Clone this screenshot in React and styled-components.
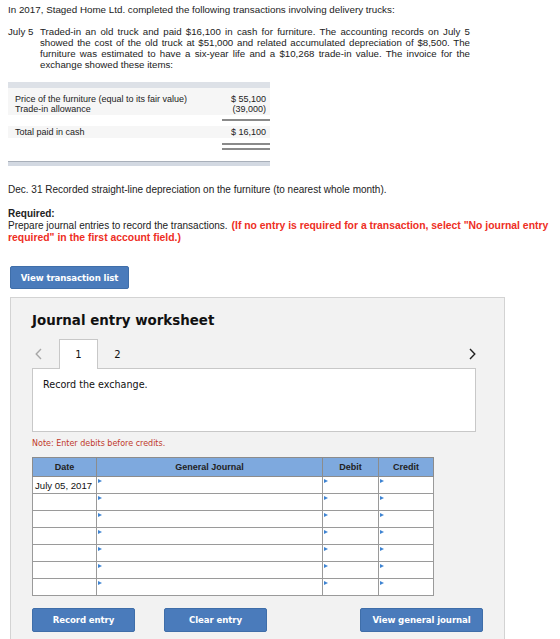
import React from 'react';
import styled, { createGlobalStyle } from 'styled-components';

const GlobalStyle = createGlobalStyle`
  body {
    margin: 0;
    background: #fff;
    font-family: "Liberation Sans", Arial, sans-serif;
    color: #222;
  }
`;

const Page = styled.div`
  width: 560px;
  height: 639px;
  overflow: hidden;
  padding: 4px 0 0 8px;
  box-sizing: border-box;
`;

const Intro = styled.p`
  margin: 0;
  font-size: 9.8px;
  line-height: 12px;
`;

const Entry = styled.div`
  display: grid;
  grid-template-columns: 32px 430px;
  margin-top: 10px;
  font-size: 9.7px;
  line-height: 11px;
  p {
    margin: 0;
    text-align: justify;
  }
`;

/* invoice block */
const Invoice = styled.div`
  width: 262px;
  margin-top: 12px;
  font-size: 9px;
  line-height: 10px;
`;

const InvoiceBand = styled.div`
  height: 6px;
  background: #dde1e7;
`;

const InvoiceRow = styled.div`
  display: grid;
  grid-template-columns: 1fr 48px;
  background: ${p => (p.$shade ? '#f6f6f6' : 'transparent')};
  padding: ${p => p.$pad || '0'};
  span:last-child {
    text-align: right;
    padding-right: 4px;
  }
`;

const Rule = styled.div`
  margin-left: auto;
  width: 48px;
  border-top: 2px solid #8a8a8a;
  height: ${p => (p.$double ? '3px' : '0')};
  border-bottom: ${p => (p.$double ? '2px solid #8a8a8a' : 'none')};
  margin-top: ${p => p.$top || '0'};
  margin-bottom: ${p => p.$bottom || '0'};
`;

const InvoiceFoot = styled.div`
  height: 4px;
  margin-top: 11px;
  background: #d3d9e2;
  border-top: 1px solid #a9b0ba;
`;

const Dec = styled.p`
  margin: 18px 0 0;
  font-size: 10px;
  line-height: 12px;
`;

const Required = styled.div`
  margin-top: 12px;
  width: 574px;
  font-size: 10px;
  line-height: 12px;
  b {
    display: block;
  }
  em {
    font-style: normal;
    font-weight: bold;
    font-size: 10.4px;
    padding-left: 4px;
    color: #ee2e24;
  }
`;

const BlueButton = styled.button`
  display: inline-flex;
  align-items: center;
  justify-content: center;
  width: ${p => p.$w}px;
  height: ${p => p.$h || 24}px;
  margin-left: ${p => p.$ml || 0}px;
  padding: 0;
  border: 1px solid #3f6ea9;
  border-radius: 2px;
  background: #4a7bbb;
  color: #fff;
  font-family: "DejaVu Sans", Verdana, sans-serif;
  font-weight: bold;
  font-size: 8.6px;
  letter-spacing: -0.1px;
`;

const TopButtonRow = styled.div`
  margin: 22px 0 0 2px;
  display: flex;
`;

/* worksheet panel */
const Panel = styled.div`
  margin: 8px 0 0 2px;
  width: 495px;
  height: 360px;
  box-sizing: border-box;
  background: #f2f2f2;
  border: 1px solid #d3d3d3;
  padding: 14px 0 0 21px;
  font-family: "DejaVu Sans", Verdana, sans-serif;
`;

const Title = styled.h2`
  margin: 0;
  font-size: 13.4px;
  line-height: 18px;
  font-weight: bold;
  color: #111;
`;

const TabBar = styled.div`
  display: flex;
  align-items: flex-end;
  height: 29px;
  margin-top: 9px;
  width: 444px;
`;

const Arrow = styled.span`
  width: 27px;
  height: 29px;
  box-sizing: border-box;
  display: flex;
  align-items: center;
  justify-content: ${p => (p.$right ? 'flex-end' : 'flex-start')};
  padding-left: ${p => (p.$right ? '0' : '3px')};
  margin-left: ${p => (p.$right ? 'auto' : '0')};
  color: ${p => (p.$muted ? '#a8a8a8' : '#222')};
  svg {
    display: block;
  }
`;

const Tab = styled.div`
  width: 39px;
  height: ${p => (p.$active ? '30px' : '28px')};
  box-sizing: border-box;
  display: flex;
  align-items: center;
  justify-content: center;
  font-size: 10px;
  color: #111;
  background: ${p => (p.$active ? '#fff' : 'transparent')};
  border: ${p => (p.$active ? '1px solid #c8c8c8' : 'none')};
  border-bottom: none;
  margin-bottom: ${p => (p.$active ? '-1px' : '0')};
  position: relative;
  z-index: 1;
`;

const PromptBox = styled.div`
  width: 444px;
  height: 64px;
  box-sizing: border-box;
  background: #fff;
  border: 1px solid #c8c8c8;
  padding: 10px 10px;
  font-size: 9.6px;
  color: #111;
`;

const Note = styled.p`
  margin: 7px 0 0;
  font-size: 8px;
  color: #c0392b;
`;

const Journal = styled.table`
  margin-top: 9px;
  width: 401px;
  border-collapse: collapse;
  table-layout: fixed;
  font-family: "Liberation Sans", Arial, sans-serif;
  font-size: 9px;
  th {
    height: 18px;
    background: #7ea9de;
    border: 1px solid #8c8c8c;
    font-weight: bold;
    color: #222;
    padding: 0;
  }
  td {
    height: 16px;
    background: #fff;
    border: 1px solid #9a9a9a;
    padding: 0 2px;
    position: relative;
    color: #111;
    font-size: 9.6px;
  }
`;

const Caret = styled.i`
  position: absolute;
  left: 1px;
  top: 2px;
  width: 0;
  height: 0;
  border-top: 2.5px solid transparent;
  border-bottom: 2.5px solid transparent;
  border-left: 4px solid #3f84d2;
`;

const BottomButtons = styled.div`
  display: flex;
  margin-top: 12px;
`;

const rows = ['July 05, 2017', '', '', '', '', '', ''];

const Chevron = ({ dir }) => (
  <svg width="7" height="12" viewBox="0 0 7 12" fill="none" stroke="currentColor" strokeWidth="1.4">
    {dir === 'left' ? <path d="M6 1 L1.2 6 L6 11" /> : <path d="M1 1 L5.8 6 L1 11" />}
  </svg>
);

const App = () => (
  <>
    <GlobalStyle />
    <Page>
      <Intro>In 2017, Staged Home Ltd. completed the following transactions involving delivery trucks:</Intro>

      <Entry>
        <span>July 5</span>
        <p>
          Traded-in an old truck and paid $16,100 in cash for furniture. The accounting records on July 5
          showed the cost of the old truck at $51,000 and related accumulated depreciation of $8,500. The
          furniture was estimated to have a six-year life and a $10,268 trade-in value. The invoice for the
          exchange showed these items:
        </p>
      </Entry>

      <Invoice>
        <InvoiceBand />
        <InvoiceRow $shade $pad="6px 0 0 7px">
          <span>Price of the furniture (equal to its fair value)</span>
          <span>$ 55,100</span>
        </InvoiceRow>
        <InvoiceRow $shade $pad="0 0 1px 7px">
          <span>Trade-in allowance</span>
          <span>(39,000)</span>
        </InvoiceRow>
        <Rule $top="4px" $bottom="5px" />
        <InvoiceRow $shade $pad="1px 0 1px 7px">
          <span>Total paid in cash</span>
          <span>$ 16,100</span>
        </InvoiceRow>
        <Rule $double $top="5px" />
        <InvoiceFoot />
      </Invoice>

      <Dec>Dec. 31 Recorded straight-line depreciation on the furniture (to nearest whole month).</Dec>

      <Required>
        <b>Required:</b>
        Prepare journal entries to record the transactions.
        <em>(If no entry is required for a transaction, select "No journal entry required" in the first account field.)</em>
      </Required>

      <TopButtonRow>
        <BlueButton $w={119} $h={23}>View transaction list</BlueButton>
      </TopButtonRow>

      <Panel>
        <Title>Journal entry worksheet</Title>

        <TabBar>
          <Arrow $muted><Chevron dir="left" /></Arrow>
          <Tab $active>1</Tab>
          <Tab>2</Tab>
          <Arrow $right><Chevron dir="right" /></Arrow>
        </TabBar>

        <PromptBox>Record the exchange.</PromptBox>

        <Note>Note: Enter debits before credits.</Note>

        <Journal>
          <colgroup>
            <col style={{ width: 64 }} />
            <col style={{ width: 226 }} />
            <col style={{ width: 56 }} />
            <col style={{ width: 55 }} />
          </colgroup>
          <thead>
            <tr>
              <th>Date</th>
              <th>General Journal</th>
              <th>Debit</th>
              <th>Credit</th>
            </tr>
          </thead>
          <tbody>
            {rows.map((date, i) => (
              <tr key={i}>
                <td>{date}</td>
                <td><Caret /></td>
                <td><Caret /></td>
                <td><Caret /></td>
              </tr>
            ))}
          </tbody>
        </Journal>

        <BottomButtons>
          <BlueButton $w={103}>Record entry</BlueButton>
          <BlueButton $w={103} $ml={29}>Clear entry</BlueButton>
          <BlueButton $w={123} $ml={93}>View general journal</BlueButton>
        </BottomButtons>
      </Panel>
    </Page>
  </>
);

export default App;
